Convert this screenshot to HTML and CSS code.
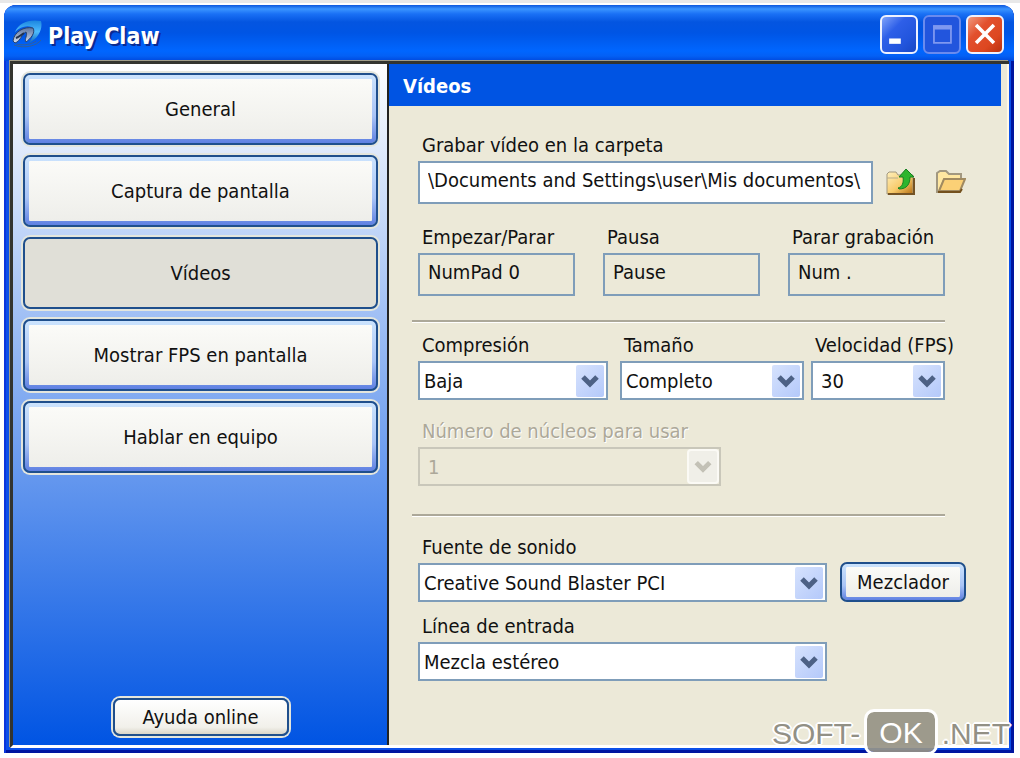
FILE: index.html
```html
<!DOCTYPE html>
<html lang="es">
<head>
<meta charset="utf-8">
<title>Play Claw</title>
<link rel="stylesheet" href="styles.css">
</head>
<body>
<main class="window">
  <header class="titlebar">
    <svg class="logo" viewBox="0 0 30 30" aria-hidden="true">
      <defs>
        <linearGradient id="fin" x1="0" y1="0" x2="0" y2="1"><stop offset="0" stop-color="#1c86df"/><stop offset=".5" stop-color="#4dbcff"/><stop offset="1" stop-color="#1668b5"/></linearGradient>
        <linearGradient id="steel" x1="0" y1="0" x2="0" y2="1"><stop offset="0" stop-color="#5b74a0"/><stop offset="1" stop-color="#d3dcec"/></linearGradient>
      </defs>
      <path d="M3 13C7 4 16 0 29 2C31 9 27 19 17 24C21 18 23 13 20 8C14 6 8 8 3 13Z" fill="url(#fin)"/>
      <path d="M1 22C2 13 12 7 21 9C24 14 18 20 14 23C12 20 16 16 14 13C10 14 9 22 3 24Z" fill="url(#steel)" stroke="#27436f"/>
      <path d="M12 14C9 16 7 18 4 19" stroke="#22324e" stroke-width="2" fill="none"/>
      <path d="M2 26C12 30 25 27 29 21M4 25C12 27 20 25 24 22" stroke="#305f9c" fill="none"/>
    </svg>
    <h1 class="title">Play Claw</h1>
    <button class="winbtn" aria-label="Minimizar"><svg viewBox="0 0 38 38"><path d="M8 24H21V30H8Z" fill="#fff"/></svg></button>
    <button class="winbtn winbtn-off" aria-label="Maximizar" disabled><svg viewBox="0 0 38 38"><path d="M10 11H29V29H10Z" fill="none" stroke="#7f98f0" stroke-width="2"/><path d="M9 9H30V14H9Z" fill="#7f98f0"/></svg></button>
    <button class="winbtn winbtn-close" aria-label="Cerrar"><svg viewBox="0 0 38 38"><path d="M9 9L29 29M29 9L9 29" stroke="#fff" stroke-width="4"/></svg></button>
  </header>
  <div class="client">
    <nav class="sidebar">
      <button class="nav">General</button>
      <button class="nav">Captura de pantalla</button>
      <button class="nav nav-active">Vídeos</button>
      <button class="nav">Mostrar FPS en pantalla</button>
      <button class="nav">Hablar en equipo</button>
      <button class="nav nav-help">Ayuda online</button>
    </nav>
    <section class="panel">
      <h2 class="heading">Vídeos</h2>
      <form class="form">
        <div class="row">
          <div class="field grow">
            <label for="folder">Grabar vídeo en la carpeta</label>
            <input class="text" id="folder" value="\Documents and Settings\user\Mis documentos\">
          </div>
          <div class="tools">
            <button type="button" class="tool" aria-label="Subir carpeta">
              <svg viewBox="0 0 30 28">
                <defs><linearGradient id="gold" x1="0" y1="0" x2="1" y2="1"><stop offset="0" stop-color="#fff0bc"/><stop offset=".55" stop-color="#f8cb6c"/><stop offset="1" stop-color="#b56e12"/></linearGradient></defs>
                <path d="M1 5L3 3H10L12 6H27V25H1Z" fill="url(#gold)" stroke="#a29880"/>
                <path d="M1 9H12" stroke="#b9ad8c"/>
                <path d="M2 25H28V9" fill="none" stroke="#745325" stroke-width="2"/>
                <path d="M12 19C16 18 18 14 17 8H13L20 0L28 8H24C24 15 21 20 13 20Z" fill="#2eb52e" stroke="#168020"/>
              </svg>
            </button>
            <button type="button" class="tool" aria-label="Abrir carpeta">
              <svg viewBox="0 0 30 28">
                <path d="M1 4L4 2H10L13 5H25V11H8L3 23H1Z" fill="#ffe7a1" stroke="#a29880" stroke-width="2"/>
                <path d="M8 10H29L24 22H3Z" fill="#fbd076" stroke="#a18a60" stroke-width="2"/>
                <path d="M2 23H24L26 20" fill="none" stroke="#73501d" stroke-width="2"/>
              </svg>
            </button>
          </div>
        </div>
        <div class="row keys">
          <div class="field"><label for="start">Empezar/Parar</label><input class="text key" id="start" value="NumPad 0" readonly></div>
          <div class="field"><label for="pause">Pausa</label><input class="text key" id="pause" value="Pause" readonly></div>
          <div class="field"><label for="stop">Parar grabación</label><input class="text key" id="stop" value="Num ." readonly></div>
        </div>
        <hr class="rule">
        <div class="row options">
          <div class="field compression"><label for="comp">Compresión</label>
            <div class="combo"><select id="comp"><option>Baja</option></select><svg class="arrow" viewBox="0 0 28 32"><path d="M7 12L14 19L21 12" /></svg></div></div>
          <div class="field size"><label for="size">Tamaño</label>
            <div class="combo"><select id="size"><option>Completo</option></select><svg class="arrow" viewBox="0 0 28 32"><path d="M7 12L14 19L21 12" /></svg></div></div>
          <div class="field speed"><label for="fps">Velocidad (FPS)</label>
            <div class="combo inset"><select id="fps"><option>30</option></select><svg class="arrow" viewBox="0 0 28 32"><path d="M7 12L14 19L21 12" /></svg></div></div>
        </div>
        <div class="field cores off"><label for="cores">Número de núcleos para usar</label>
          <div class="combo inset"><select id="cores" disabled><option>1</option></select><svg class="arrow" viewBox="0 0 28 32"><path d="M7 12L14 19L21 12" /></svg></div></div>
        <hr class="rule">
        <div class="row sound">
          <div class="field grow"><label for="source">Fuente de sonido</label>
            <div class="combo"><select id="source"><option>Creative Sound Blaster PCI</option></select><svg class="arrow" viewBox="0 0 28 32"><path d="M7 12L14 19L21 12" /></svg></div></div>
          <button type="button" class="nav mixer">Mezclador</button>
        </div>
        <div class="field line"><label for="line">Línea de entrada</label>
          <div class="combo"><select id="line"><option>Mezcla estéreo</option></select><svg class="arrow" viewBox="0 0 28 32"><path d="M7 12L14 19L21 12" /></svg></div></div>
      </form>
    </section>
  </div>
</main>
<div class="watermark"><span>SOFT-</span><span class="badge">OK</span><span>.NET</span></div>
</body>
</html>
```
FILE: styles.css
```css
* { box-sizing: border-box; }
body {
  margin: 0;
  min-height: 100vh;
  padding: 2px 6px 5px 4px;
  border-top: 3px solid #e8e8e8;
  display: flex;
  background: #fff;
  color: #111;
  font: 20px/26px "DejaVu Sans Condensed", "Noto Sans", sans-serif;
  position: relative;
}
button, input, select { font: inherit; color: inherit; margin: 0; }
svg { display: block; }

.window {
  flex: 1;
  display: flex;
  flex-direction: column;
  padding: 0 5px 5px 6px;
  border-radius: 12px 12px 0 0;
  background: #0b4fe8;
  box-shadow: inset 2px 0 #0a35dc, inset -3px -3px #0015a0;
}
.titlebar {
  display: flex;
  align-items: center;
  gap: 5px;
  height: 56px;
  margin: 0 -5px 0 -6px;
  padding: 2px 10px 0 8px;
  border-radius: 12px 12px 0 0;
  background: linear-gradient(#0b56dd 0, #3a94ff 4px, #1a70f5 9px, #0455e0 17px, #0055e5 28px, #0066ff 46px, #0360f5 51px, #0048dc 100%);
}
.logo { width: 30px; height: 30px; }
.title {
  flex: 1;
  margin: 0;
  padding: 4px 0 0 1px;
  color: #fff;
  font-size: 23px;
  line-height: 28px;
  text-shadow: 2px 2px #0a2a92;
}
.winbtn {
  width: 38px;
  height: 39px;
  padding: 0;
  border: 2px solid #eef2ff;
  border-radius: 6px;
  background: linear-gradient(135deg, #7fa3fa, #2e5fe8 35%, #2255dd 70%, #1747c4);
}
.winbtn svg { width: 34px; height: 34px; }
.winbtn-off { border-color: #6a8bee; background: #2255dd; }
.winbtn-close { background: linear-gradient(135deg, #f09a80, #e2502d 35%, #dd4720 70%, #b93210); }

.client {
  flex: 1;
  display: flex;
  border: solid;
  border-width: 3px 0 3px 3px;
  border-color: #33342f #fff #fff #33342f;
  box-shadow: -1px -1px #a09c88;
}
.sidebar {
  flex: 0 0 374px;
  display: flex;
  flex-direction: column;
  gap: 10px;
  padding: 9px 9px 9px 10px;
  background: linear-gradient(#fff, #0054e3);
}
.nav {
  height: 72px;
  padding: 4px;
  border: 2px solid #1f4f8c;
  border-radius: 7px;
  background:
    linear-gradient(#fbfbf8, #eeeeea) content-box,
    linear-gradient(#cbe3fd, #a9c4f6 60%, #5f80e2) padding-box;
}
.sidebar .nav { box-shadow: 0 0 0 2px #e4e6dd; }
.nav-active { background: #e0dfd7; }
.nav-help {
  align-self: center;
  width: 176px;
  height: 38px;
  margin-top: auto;
  padding: 0;
  background: linear-gradient(#fff, #f1f0ea 80%, #d9d5c8);
}
.panel {
  flex: 1;
  min-width: 0;
  border-left: 2px solid #222;
  border-right: 2px solid #fff8e8;
  background: #ece9d8;
}
.heading {
  margin: 0 6px 0 0;
  padding: 9px 14px 7px;
  background: #0054e3;
  color: #fff;
  font-size: 20px;
  line-height: 26px;
}
.form { padding: 26px 41px 0 29px; }
.row { display: flex; align-items: flex-end; }
.field { min-width: 0; }
.grow { flex: 1; }
label { display: block; padding-left: 4px; margin-bottom: 3px; white-space: nowrap; }
.text {
  display: block;
  width: 100%;
  height: 43px;
  padding: 0 8px 5px;
  border: 2px solid #7f9db9;
  border-radius: 0;
  background: #fff;
}
.key { background: #ece9d8; }
.tools { display: flex; gap: 20px; padding: 0 0 7px 13px; }
.tool { padding: 0; border: 0; background: none; }
.tool svg { width: 30px; height: 28px; }
.keys { gap: 28px; margin: 20px 21px 24px 0; }
.keys .field { flex: 1; }
.rule {
  height: 3px;
  margin: 0 21px 9px -6px;
  border: solid;
  border-width: 2px 0 1px;
  border-color: #aca899 #fff #fff;
}
.options { gap: 7px; margin-right: 21px; }
.compression { flex: 190; margin-right: 5px; }
.size { flex: 184; }
.speed { flex: 134; }
.combo { display: grid; align-items: center; }
.combo select {
  grid-area: 1 / 1;
  appearance: none;
  width: 100%;
  height: 39px;
  padding: 0 34px 0 4px;
  border: 2px solid #7f9db9;
  border-radius: 0;
  background: #fff;
  opacity: 1;
}
.combo.inset select { padding-left: 8px; }
.arrow {
  grid-area: 1 / 1;
  justify-self: end;
  width: 28px;
  height: 32px;
  margin-right: 4px;
  border-radius: 2px;
  background: linear-gradient(135deg, #d6e2fd, #b4c9fa);
  pointer-events: none;
}
.arrow path { fill: none; stroke: #4d6185; stroke-width: 5; }
.cores { width: 303px; margin: 18px 0 28px; }
.off label, .combo select:disabled { color: #aca899; }
.off label { text-shadow: 1px 1px #fff; }
.combo select:disabled { border-color: #c9c7ba; background: #ece9d8; }
.off .arrow { height: 31px; background: #f0efe8; box-shadow: 0 0 0 2px #fbfaf5; }
.off .arrow path { stroke: #c3c1b6; }
.cores + .rule { margin-bottom: 17px; }
.sound { gap: 13px; }
.mixer { width: 126px; height: 40px; padding: 3px 4px; }
.line { margin: 11px 139px 0 0; }

.watermark {
  position: absolute;
  right: 10px;
  bottom: 3px;
  display: flex;
  align-items: center;
  gap: 4px;
  color: #929085;
  font: 30px/36px "Liberation Sans", Arial, sans-serif;
  text-shadow: 2px 0 #fff, -2px 0 #fff, 0 2px #fff, 0 -2px #fff, 1px 1px #fff, -1px -1px #fff, 1px -1px #fff, -1px 1px #fff;
}
.watermark span { padding-top: 3px; }
.watermark .badge {
  padding: 3px 12px 1px;
  border: 3px solid #fff;
  border-radius: 10px;
  background: rgba(150, 147, 133, 0.92);
  background-clip: padding-box;
  color: #fff;
  text-shadow: none;
}
```
